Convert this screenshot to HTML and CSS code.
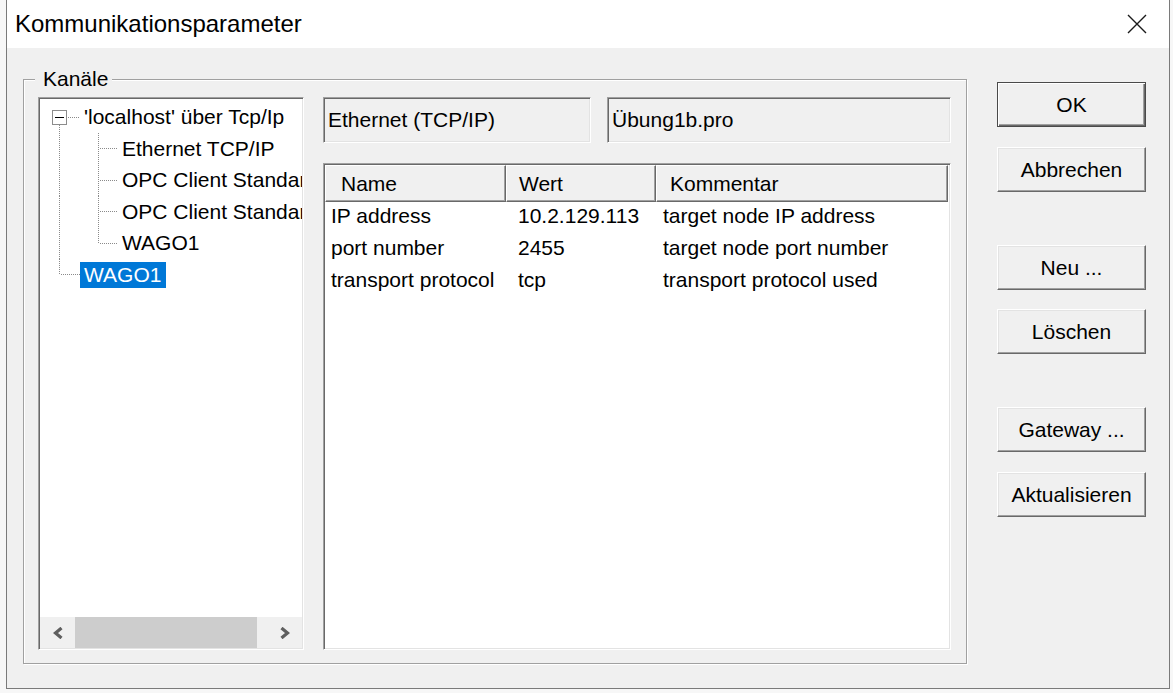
FILE: index.html
```html
<!DOCTYPE html>
<html lang="de">
<head>
<meta charset="utf-8">
<title>Kommunikationsparameter</title>
<link rel="stylesheet" href="styles.css">
</head>
<body>
<div class="window">
  <div class="titlebar">
    <span class="title">Kommunikationsparameter</span>
    <svg class="close" width="20" height="20" viewBox="0 0 20 20"><path d="M1 1L19 19M19 1L1 19" stroke="#1a1a1a" stroke-width="1.4" fill="none"/></svg>
  </div>
  <div class="client">
    <fieldset class="group">
      <legend class="legend">Kanäle</legend>
      <div class="group-body">
        <div class="tree sunken">
          <ul class="tree-list">
            <li class="row">
              <svg class="g0" viewBox="0 0 40 31.5"><rect x="12.5" y="8.5" width="14" height="14" fill="#fff" stroke="#8c8c8c"/><path d="M15 15.5H24" stroke="#000"/><path d="M28 15.5H40M19.5 23V31.5" stroke="#8a8a8a" stroke-dasharray="1 1"/></svg>
              <span class="label">'localhost' über Tcp/Ip</span>
            </li>
            <li class="row">
              <svg class="g0" viewBox="0 0 40 31.5"><path d="M19.5 0V31.5" stroke="#8a8a8a" stroke-dasharray="1 1"/></svg>
              <svg class="g1" viewBox="0 0 38 31.5"><path d="M18.5 0V31.5M20 15.5H37" stroke="#8a8a8a" stroke-dasharray="1 1"/></svg>
              <span class="label">Ethernet TCP/IP</span>
            </li>
            <li class="row">
              <svg class="g0" viewBox="0 0 40 31.5"><path d="M19.5 0V31.5" stroke="#8a8a8a" stroke-dasharray="1 1"/></svg>
              <svg class="g1" viewBox="0 0 38 31.5"><path d="M18.5 0V31.5M20 15.5H37" stroke="#8a8a8a" stroke-dasharray="1 1"/></svg>
              <span class="label">OPC Client Standard</span>
            </li>
            <li class="row">
              <svg class="g0" viewBox="0 0 40 31.5"><path d="M19.5 0V31.5" stroke="#8a8a8a" stroke-dasharray="1 1"/></svg>
              <svg class="g1" viewBox="0 0 38 31.5"><path d="M18.5 0V31.5M20 15.5H37" stroke="#8a8a8a" stroke-dasharray="1 1"/></svg>
              <span class="label">OPC Client Standard</span>
            </li>
            <li class="row">
              <svg class="g0" viewBox="0 0 40 31.5"><path d="M19.5 0V31.5" stroke="#8a8a8a" stroke-dasharray="1 1"/></svg>
              <svg class="g1" viewBox="0 0 38 31.5"><path d="M18.5 0V15.5M20 15.5H37" stroke="#8a8a8a" stroke-dasharray="1 1"/></svg>
              <span class="label">WAGO1</span>
            </li>
            <li class="row">
              <svg class="g0" viewBox="0 0 40 31.5"><path d="M19.5 0V15.5M21 15.5H40" stroke="#8a8a8a" stroke-dasharray="1 1"/></svg>
              <span class="label sel">WAGO1</span>
            </li>
          </ul>
          <div class="hscroll">
            <span class="sb-btn"><svg width="12" height="12" viewBox="0 0 12 12"><path d="M9.5 1L3.5 6L9.5 11" stroke="#5f5f5f" stroke-width="3.2" fill="none"/></svg></span>
            <div class="track"><div class="thumb"></div></div>
            <span class="sb-btn"><svg width="12" height="12" viewBox="0 0 12 12"><path d="M2.5 1L8.5 6L2.5 11" stroke="#5f5f5f" stroke-width="3.2" fill="none"/></svg></span>
          </div>
        </div>
        <div class="right">
          <div class="fields">
            <div class="field sunken f1">Ethernet (TCP/IP)</div>
            <div class="field sunken f2">Übung1b.pro</div>
          </div>
          <div class="table sunken">
            <div class="thead">
              <div class="th c1">Name</div>
              <div class="th c2">Wert</div>
              <div class="th c3">Kommentar</div>
            </div>
            <div class="tbody">
              <div class="tr"><span class="td c1">IP address</span><span class="td c2">10.2.129.113</span><span class="td c3">target node IP address</span></div>
              <div class="tr"><span class="td c1">port number</span><span class="td c2">2455</span><span class="td c3">target node port number</span></div>
              <div class="tr"><span class="td c1">transport protocol</span><span class="td c2">tcp</span><span class="td c3">transport protocol used</span></div>
            </div>
          </div>
        </div>
      </div>
    </fieldset>
    <div class="buttons">
      <button class="btn default">OK</button>
      <button class="btn gap-s">Abbrechen</button>
      <button class="btn gap-l">Neu ...</button>
      <button class="btn gap-xs">Löschen</button>
      <button class="btn gap-l">Gateway ...</button>
      <button class="btn gap-s">Aktualisieren</button>
    </div>
  </div>
</div>
</body>
</html>
```
FILE: styles.css
```css
* { box-sizing: border-box; }
html, body { margin: 0; padding: 0; }
body {
  width: 1173px;
  height: 693px;
  overflow: hidden;
  background: #f7f7f7;
  font-family: "Liberation Sans", Arial, sans-serif;
  color: #000;
}
.window {
  margin-left: 6px;
  width: 1164px;
  height: 689px;
  border: 1px solid #7a7a7a;
  border-top: 0;
  background: #f0f0f0;
  display: flex;
  flex-direction: column;
}
.titlebar {
  height: 48px;
  flex: none;
  background: #fff;
  display: flex;
  align-items: center;
  justify-content: space-between;
  padding: 0 22px 0 8px;
}
.title {
  font-size: 24px;
  line-height: 48px;
  color: #000;
}
.close { display: block; }
.client {
  flex: 1;
  display: flex;
  align-items: flex-start;
  padding-left: 16px;
}
.group {
  margin: 18px 0 0 0;
  padding: 5px 15px 13px 14px;
  border: 1px solid #a0a0a0;
  box-shadow: 1px 1px 0 #fff, inset 1px 1px 0 #fff;
  min-width: 0;
  width: 944px;
}
.legend {
  margin-left: -3px;
  padding: 0 4px 0 8px;
  font-size: 21px;
  line-height: 26px;
  background: #f0f0f0;
}
.group-body {
  display: grid;
  grid-template-columns: 266px 628px;
  column-gap: 19px;
  height: 553px;
}
.sunken {
  border: 1px solid;
  border-color: #a0a0a0 #fff #fff #a0a0a0;
  box-shadow: inset 1px 1px 0 #696969, inset -1px -1px 0 #e3e3e3;
  padding: 1px;
}
.tree {
  background: #fff;
  display: flex;
  flex-direction: column;
  overflow: hidden;
}
.tree-list {
  flex: 1;
  list-style: none;
  margin: 0;
  padding: 2.5px 0 0 0;
  overflow: hidden;
}
.row {
  display: flex;
  align-items: center;
  height: 31.5px;
  white-space: nowrap;
}
.g0, .g1 {
  flex: none;
  height: 31.5px;
  display: block;
}
.g0 { width: 40px; }
.g1 { width: 38px; }
.label {
  font-size: 21px;
  line-height: 26px;
  height: 26px;
  padding: 0 5px 0 4px;
}
.label.sel {
  background: #0078d7;
  color: #fff;
}
.hscroll {
  flex: none;
  height: 31px;
  display: flex;
  background: #f0f0f0;
}
.sb-btn {
  width: 35px;
  flex: none;
  display: flex;
  align-items: center;
  justify-content: center;
}
.track { flex: 1; display: flex; }
.thumb { width: 182px; background: #cdcdcd; }
.right {
  display: flex;
  flex-direction: column;
  gap: 20px;
  min-width: 0;
}
.fields {
  display: flex;
  gap: 16px;
  height: 46px;
  flex: none;
}
.field {
  background: #f0f0f0;
  font-size: 21px;
  line-height: 42px;
  padding-left: 4px;
  white-space: nowrap;
}
.f1 { width: 268px; flex: none; }
.f2 { flex: 1; }
.table {
  flex: 1;
  background: #fff;
  display: flex;
  flex-direction: column;
}
.thead {
  display: grid;
  grid-template-columns: 181px 150px 292px;
  height: 35px;
  flex: none;
}
.th {
  border: 1px solid;
  border-color: #fff #696969 #696969 #fff;
  box-shadow: inset -1px -1px 0 #a0a0a0;
  background: #f0f0f0;
  font-size: 21px;
  line-height: 35px;
  white-space: nowrap;
}
.th.c1 { padding-left: 15px; }
.th.c2 { padding-left: 12px; }
.th.c3 { padding-left: 13px; }
.tr {
  display: grid;
  grid-template-columns: 181px 150px 1fr;
  height: 32px;
  font-size: 21px;
  line-height: 32px;
  white-space: nowrap;
}
.td.c1 { padding-left: 6px; }
.td.c2 { padding-left: 12px; }
.td.c3 { padding-left: 7px; }
.buttons {
  display: flex;
  flex-direction: column;
  width: 149px;
  margin: 34px 0 0 30px;
}
.btn {
  height: 45px;
  padding: 0;
  font-family: "Liberation Sans", Arial, sans-serif;
  font-size: 21px;
  color: #000;
  background: #f0f0f0;
  border: 1px solid;
  border-color: #fff #696969 #696969 #fff;
  box-shadow: inset -1px -1px 0 #a0a0a0, inset 1px 1px 0 #e3e3e3;
}
.btn.default {
  border-color: #4a4a4a;
  box-shadow: inset 1px 1px 0 #fff, inset -1px -1px 0 #696969, inset -2px -2px 0 #a0a0a0;
}
.gap-xs { margin-top: 19px; }
.gap-s { margin-top: 20px; }
.gap-l { margin-top: 53px; }
```
